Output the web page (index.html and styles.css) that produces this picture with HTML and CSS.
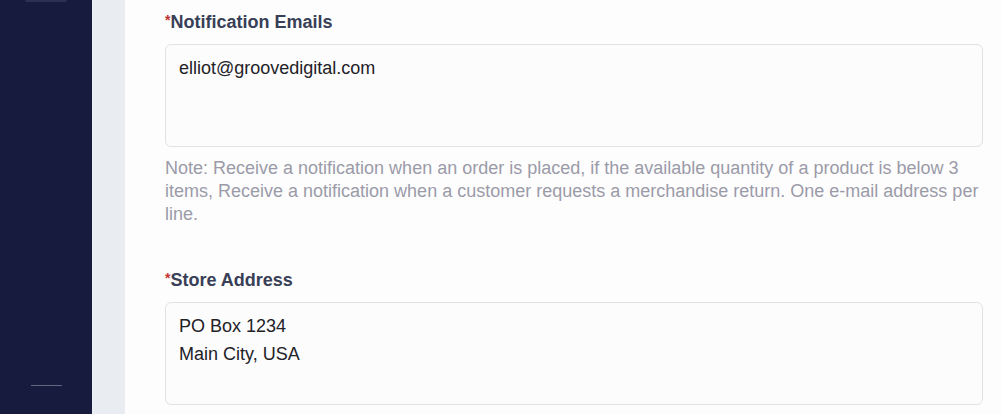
FILE: index.html
```html
<!DOCTYPE html>
<html lang="en">
<head>
    <meta charset="UTF-8">
    <meta name="viewport" content="width=device-width, initial-scale=1.0">
    <title>Store Settings</title>
    <link rel="stylesheet" href="styles.css">
</head>
<body>
    <aside class="sidebar">
        <div class="sidebar-top"></div>
        <div class="sidebar-rule"></div>
    </aside>
    <div class="gutter"></div>
    <main class="content">
        <form class="settings-form">
            <div class="field">
                <label class="field-label" for="emails"><span class="req">*</span>Notification Emails</label>
                <textarea id="emails" name="emails" class="field-input">elliot@groovedigital.com</textarea>
                <p class="field-note">Note: Receive a notification when an order is placed, if the available quantity of a product is below 3 items, Receive a notification when a customer requests a merchandise return. One e-mail address per line.</p>
            </div>
            <div class="field">
                <label class="field-label" for="address"><span class="req">*</span>Store Address</label>
                <textarea id="address" name="address" class="field-input">PO Box 1234
Main City, USA</textarea>
            </div>
        </form>
    </main>
</body>
</html>
```

FILE: styles.css
```css
html, body {
    height: 100%;
}
body {
    margin: 0;
    display: flex;
    overflow: hidden;
    font-family: "Liberation Sans", Arial, sans-serif;
    background: #fdfdfe;
}
.sidebar {
    width: 92px;
    flex-shrink: 0;
    background: #171b3d;
    display: flex;
    flex-direction: column;
    justify-content: space-between;
    align-items: center;
    padding-bottom: 28px;
    box-sizing: border-box;
}
.sidebar-top {
    width: 42px;
    height: 2px;
    margin-left: -1px;
    background: #2c3154;
    border-radius: 0 0 3px 3px;
}
.sidebar-rule {
    width: 31px;
    height: 1px;
    background: #626781;
}
.gutter {
    width: 33px;
    flex-shrink: 0;
    background: #e9ecf1;
    border-left: 1px solid #edf0f4;
    box-sizing: border-box;
}
.content {
    flex: 1;
    padding: 11px 19px 0 40px;
}
.field {
    margin-bottom: 43px;
}
.field-label {
    display: block;
    font-size: 18px;
    font-weight: bold;
    line-height: 22px;
    color: #383f56;
    margin-bottom: 11px;
}
.req {
    color: #c2332f;
    font-size: 14px;
    line-height: 0;
    vertical-align: 3px;
}
.field-input {
    display: block;
    width: 100%;
    height: 103px;
    box-sizing: border-box;
    padding: 9px 13px;
    border: 1px solid #e2e2e6;
    border-radius: 6px;
    background: #fcfcfd;
    font-family: inherit;
    font-size: 18px;
    line-height: 28px;
    color: #222226;
    resize: none;
    overflow: hidden;
}
.field-note {
    margin: 10px 0 0;
    font-size: 18px;
    line-height: 23px;
    color: #9b9ba8;
}
```
